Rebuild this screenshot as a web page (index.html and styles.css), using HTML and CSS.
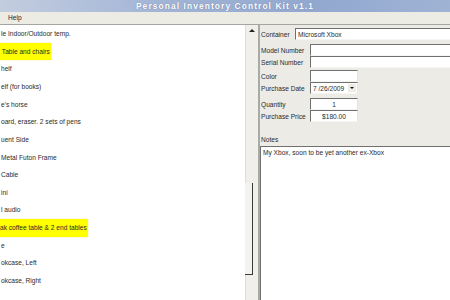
FILE: index.html
```html
<!DOCTYPE html>
<html lang="en">
<head>
  <meta charset="UTF-8">
  <title>Personal Inventory Control Kit v1.1</title>
  <link rel="stylesheet" href="styles.css">
</head>
<body>

  <div class="titlebar">Personal Inventory Control Kit v1.1</div>
  <div class="menubar"><span class="menu">Help</span></div>

  <div class="main">
    <div class="listpane">
      <div class="list">
        <div class="item">le Indoor/Outdoor temp.</div>
        <div class="item"><span class="mark">&nbsp;Table and chairs</span></div>
        <div class="item">helf</div>
        <div class="item">elf (for books)</div>
        <div class="item">e's horse</div>
        <div class="item">oard, eraser. 2 sets of pens</div>
        <div class="item">uent Side</div>
        <div class="item">Metal Futon Frame</div>
        <div class="item">Cable</div>
        <div class="item">ini</div>
        <div class="item">l audio</div>
        <div class="item"><span class="mark">ak coffee table &amp; 2 end tables</span></div>
        <div class="item">e</div>
        <div class="item">okcase, Left</div>
        <div class="item">okcase, Right</div>
      </div>
      <div class="scrollbar">
        <div class="arrow-up"></div>
        <div class="thumb"></div>
      </div>
    </div>

    <div class="form">
      <div class="row first">
        <span class="lbl short">Container</span>
        <span class="field wide">Microsoft Xbox</span>
      </div>
      <div class="row gap">
        <span class="lbl">Model Number</span>
        <span class="field wide"></span>
      </div>
      <div class="row">
        <span class="lbl">Serial Number</span>
        <span class="field wide"></span>
      </div>
      <div class="row gap-s">
        <span class="lbl">Color</span>
        <span class="field small"></span>
      </div>
      <div class="row">
        <span class="lbl">Purchase Date</span>
        <span class="field small combo">7 /26/2009<span class="drop"></span></span>
      </div>
      <div class="row gap">
        <span class="lbl">Quantity</span>
        <span class="field small center">1</span>
      </div>
      <div class="row">
        <span class="lbl">Purchase Price</span>
        <span class="field small center">$180.00</span>
      </div>
      <div class="notes-lbl">Notes</div>
      <div class="notes">My Xbox, soon to be yet another ex-Xbox</div>
    </div>
  </div>

</body>
</html>
```

FILE: styles.css
```css
body {
  margin: 0;
  width: 450px;
  height: 300px;
  overflow: hidden;
  font-family: "Liberation Sans", Arial, sans-serif;
  font-size: 6.6px;
  color: #2a2a2a;
  background: #ecebe6;
  display: flex;
  flex-direction: column;
}

.titlebar {
  height: 12px;
  line-height: 12px;
  text-align: center;
  font-size: 8.4px;
  font-weight: bold;
  letter-spacing: 1.1px;
  color: #fff;
  text-shadow: 0 0 1px #5a6f98;
  background: linear-gradient(to right, #c3cde0, #a3b5d6 35%, #92a8cf 70%, #9fb3d5);
}

.menubar {
  height: 12px;
  line-height: 12px;
  background: #ecebe4;
  border-bottom: 1px solid #a4a4a0;
}

.menu {
  margin-left: 8px;
}

.main {
  flex: 1;
  display: flex;
  min-height: 0;
}

.listpane {
  width: 258px;
  display: flex;
  border-right: 2px solid #a9a9a6;
}

.list {
  width: 245px;
  background: #fff;
  padding-top: 0.2px;
}

.item {
  height: 17.64px;
  line-height: 17.64px;
  padding-left: 1px;
  white-space: nowrap;
}

.mark {
  display: inline-block;
  height: 17.64px;
  margin-left: -1px;
  padding-right: 1px;
  background: #ffff00;
  box-shadow: 0 0 1px #eeee40;
}

.scrollbar {
  flex: 1;
  position: relative;
  background: #f0efea;
  border-left: 1px solid #dcdcd8;
}

.arrow-up {
  width: 0;
  height: 0;
  margin: 4px 0 0 3px;
  border-left: 3px solid transparent;
  border-right: 3px solid transparent;
  border-bottom: 3px solid #222;
}

.thumb {
  position: absolute;
  left: -1px;
  top: 158px;
  width: 7px;
  height: 91px;
  background: #f3f3ef;
  border-right: 1px solid #3a3a3a;
  border-bottom: 1px solid #3a3a3a;
}

.form {
  flex: 1;
  display: flex;
  flex-direction: column;
  min-width: 0;
}

.row {
  display: flex;
  align-items: center;
  height: 12px;
}

.row.first {
  margin-top: 3px;
}

.row.gap {
  margin-top: 4px;
}

.row.gap-s {
  margin-top: 2px;
}

.lbl {
  width: 49px;
  padding-left: 1px;
  white-space: nowrap;
}

.lbl.short {
  width: 34px;
}

.field {
  box-sizing: border-box;
  height: 12px;
  line-height: 11px;
  padding-left: 2px;
  background: #fff;
  border: 1px solid;
  border-color: #707070 #e4e4e0 #f4f4f0 #707070;
  white-space: nowrap;
}

.field.wide {
  flex: 1;
  border-right: none;
}

.field.small {
  width: 48px;
}

.field.center {
  text-align: center;
  padding-left: 0;
}

.combo {
  display: flex;
  align-items: center;
  justify-content: space-between;
  padding-right: 1px;
}

.drop {
  width: 8px;
  height: 8px;
  background: #ecebe6;
  position: relative;
}

.drop::after {
  content: "";
  position: absolute;
  left: 2px;
  top: 3px;
  border-left: 2px solid transparent;
  border-right: 2px solid transparent;
  border-top: 2px solid #111;
}

.notes-lbl {
  margin-top: 14px;
  padding-left: 1px;
  height: 8px;
  line-height: 8px;
}

.notes {
  flex: 1;
  margin-top: 2px;
  background: #fff;
  border-top: 1px solid #707070;
  border-left: 1px solid #707070;
  padding: 2px 0 0 2px;
  line-height: 8px;
}
```
